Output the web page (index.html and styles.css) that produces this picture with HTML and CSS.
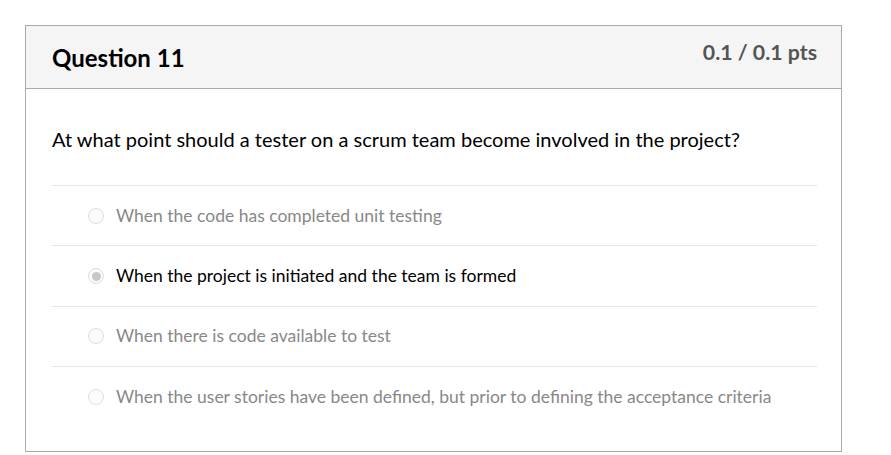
FILE: index.html
```html
<!DOCTYPE html>
<html>
<head>
<meta charset="utf-8">
<link rel="stylesheet" href="styles.css">
</head>
<body>
<div class="card">
  <div class="header">
    <h2 class="title">Question 11</h2>
    <div class="pts">0.1 / 0.1 pts</div>
  </div>
  <div class="body">
    <p class="qtext">At what point should a tester on a scrum team become involved in the project?</p>
    <div class="answers">
      <div class="answer"><span class="radio"></span><span class="label">When the code has completed unit testing</span></div>
      <div class="answer selected"><span class="radio"></span><span class="label">When the project is initiated and the team is formed</span></div>
      <div class="answer"><span class="radio"></span><span class="label">When there is code available to test</span></div>
      <div class="answer"><span class="radio"></span><span class="label">When the user stories have been defined, but prior to defining the acceptance criteria</span></div>
    </div>
  </div>
</div>
</body>
</html>
```
FILE: styles.css
```css
html, body {
  margin: 0;
  padding: 0;
  background: #fff;
}
body {
  padding: 25px 0 0 25px;
  font-family: Lato, "Liberation Sans", sans-serif;
}
.card {
  width: 815px;
  height: 425px;
  border: 1px solid #aaaaaa;
  box-sizing: content-box;
}
.header {
  height: 62px;
  background: #f5f5f5;
  border-bottom: 1px solid #aaaaaa;
  display: flex;
  justify-content: space-between;
  padding: 0 24px 0 26px;
}
.title {
  margin: 0;
  padding-top: 18px;
  font-size: 24px;
  font-weight: 700;
  line-height: 28px;
  color: #000;
}
.pts {
  padding-top: 13px;
  font-size: 21.3px;
  font-weight: 700;
  line-height: 26px;
  color: #555;
}
.body {
  padding: 0 24px 0 26px;
}
.qtext {
  margin: 0;
  padding-top: 37px;
  height: 59px;
  font-size: 20px;
  line-height: 26px;
  color: #000;
  box-sizing: content-box;
}
.answer {
  display: flex;
  align-items: center;
  height: 60.4px;
  border-top: 1px solid #e6e6e6;
  padding-left: 36px;
  box-sizing: border-box;
}
.radio {
  width: 14px;
  height: 14px;
  border: 1px solid #dedede;
  border-radius: 50%;
  background: #fbfbfb;
  margin-right: 12px;
  flex: none;
  box-sizing: content-box;
  position: relative;
}
.selected .radio::after {
  content: "";
  position: absolute;
  left: 2.5px;
  top: 2.5px;
  width: 9px;
  height: 9px;
  border-radius: 50%;
  background: #c8c8c8;
}
.label {
  font-size: 17.5px;
  line-height: 22px;
  color: #888;
}
.selected .label {
  color: #000;
}
```
